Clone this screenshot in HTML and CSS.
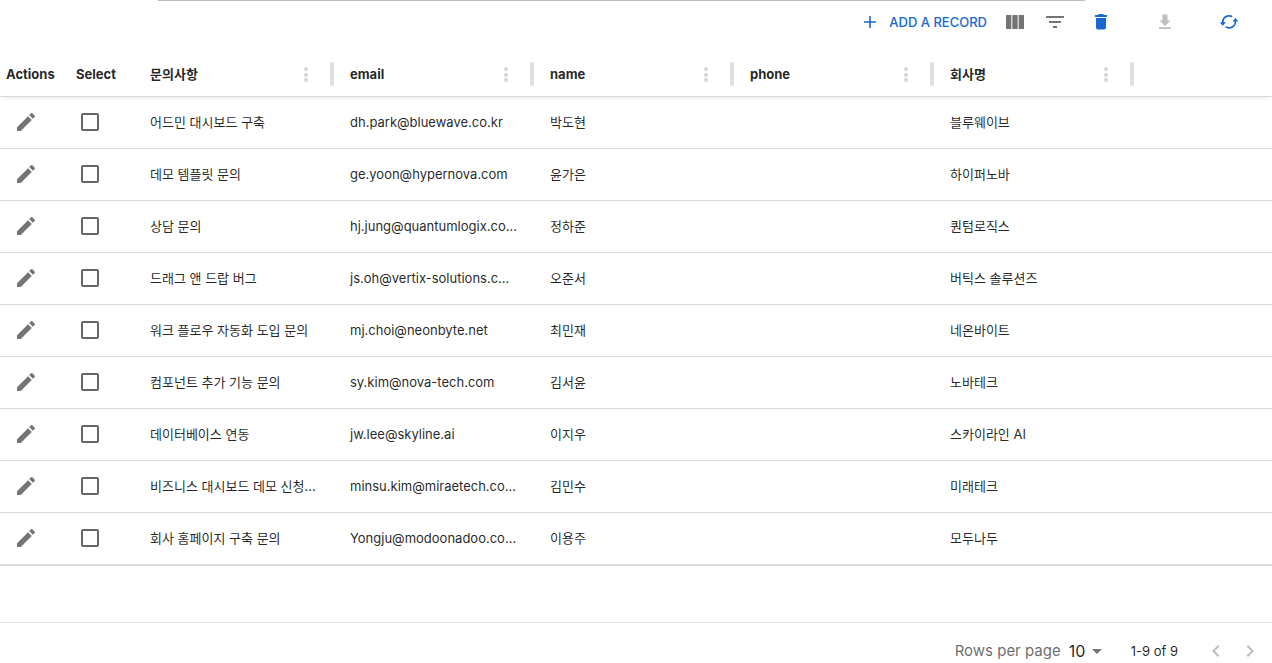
FILE: index.html
```html
<!DOCTYPE html>
<html lang="ko">
<head>
    <meta charset="UTF-8">
    <meta name="viewport" content="width=device-width, initial-scale=1">
    <title>Records</title>
    <link rel="stylesheet" href="styles.css">
</head>
<body>
    <svg class="symbols" aria-hidden="true">
        <symbol id="edit" viewBox="0 0 24 24"><path d="M3 17.25V21h3.75L17.81 9.94l-3.75-3.75L3 17.25zM20.71 7.04c.39-.39.39-1.02 0-1.41l-2.34-2.34a.9959.9959 0 0 0-1.41 0l-1.83 1.83 3.75 3.75 1.83-1.83z"/></symbol>
        <symbol id="more" viewBox="0 0 18 18"><circle cx="9" cy="4" r="2"/><circle cx="9" cy="10" r="2"/><circle cx="9" cy="15" r="2"/></symbol>
    </svg>

    <div class="top-line"></div>
    <div class="toolbar">
        <button class="add-btn">
            <svg class="icon-sm" viewBox="0 0 18 18"><path d="M3 8.200h5.200V3h1.600v5.200H15v1.600H9.800V15H8.200V9.800H3z"/></svg>
            ADD A RECORD
        </button>
        <button class="icon-btn" aria-label="Columns">
            <svg class="icon" viewBox="0 0 24 24"><path d="M14.670 5v14H9.330V5h5.340zm1 14H21V5h-5.330v14zm-7.340 0V5H3v14h5.330z"/></svg>
        </button>
        <button class="icon-btn" aria-label="Filter">
            <svg class="icon" viewBox="0 0 24 24"><path d="M10 18h4v-2h-4v2zM3 6v2h18V6H3zm3 7h12v-2H6v2z"/></svg>
        </button>
        <div class="tools">
            <button class="tool-btn" aria-label="Delete">
                <svg class="icon-sm" viewBox="0 0 18 18"><path d="M4 14.500C4 15.700 4.900 16.500 6 16.500h6c1.100 0 2-.8 2-2V5H4v9.500zM15 2h-3l-1-.9H7L6 2H3v2h12V2z"/></svg>
            </button>
            <button class="tool-btn" aria-label="Download" disabled>
                <svg class="icon-sm" viewBox="0 0 18 18"><path d="M14.500 7.500h-3V1.500h-5v6h-3L9 13l5.500-5.500zM3 14.200v1.800h12v-1.800H3z"/></svg>
            </button>
            <button class="tool-btn" aria-label="Refresh">
                <svg class="icon" viewBox="0 0 24 24"><path d="M21.500 11.500 18.400 8 15.500 11.500h2c.1 3.200-2.200 5.500-5.500 5.500-1 0-1.900-.2-2.700-.7L8.200 17.600c1.100.7 2.400 1.100 3.800 1.100 4.200 0 7.200-3.200 7.200-7.200h2.300zM6.700 12.300C6.500 9 8.800 6.700 12 6.700c.9 0 1.800.2 2.600.6l1.200-1.200A7.300 7.300 0 0 0 12 5c-4.200 0-7.200 3.200-7 7.300H2.700l3.100 3.500 3.100-3.500H6.700z"/></svg>
            </button>
        </div>
    </div>

    <main class="grid">
        <table>
            <colgroup>
                <col class="col-actions">
                <col class="col-select">
                <col class="col-data">
                <col class="col-data">
                <col class="col-data">
                <col class="col-data">
                <col class="col-data">
                <col>
            </colgroup>
            <thead>
                <tr>
                    <th class="narrow">Actions</th>
                    <th class="narrow">Select</th>
                    <th><div class="head"><span>문의사항</span><button class="menu-btn" aria-label="문의사항 menu"><svg class="icon-sm"><use href="#more"/></svg></button><i class="resizer"></i></div></th>
                    <th><div class="head"><span>email</span><button class="menu-btn" aria-label="email menu"><svg class="icon-sm"><use href="#more"/></svg></button><i class="resizer"></i></div></th>
                    <th><div class="head"><span>name</span><button class="menu-btn" aria-label="name menu"><svg class="icon-sm"><use href="#more"/></svg></button><i class="resizer"></i></div></th>
                    <th><div class="head"><span>phone</span><button class="menu-btn" aria-label="phone menu"><svg class="icon-sm"><use href="#more"/></svg></button><i class="resizer"></i></div></th>
                    <th><div class="head"><span>회사명</span><button class="menu-btn" aria-label="회사명 menu"><svg class="icon-sm"><use href="#more"/></svg></button><i class="resizer"></i></div></th>
                    <th></th>
                </tr>
            </thead>
            <tbody id="rows"></tbody>
        </table>
    </main>

    <footer class="pagination">
        <label for="page-size">Rows per page</label>
        <div class="page-size">
            <select id="page-size">
                <option>5</option>
                <option selected>10</option>
                <option>25</option>
            </select>
            <svg class="icon" viewBox="0 0 24 24"><path d="M7 10l5 5 5-5z"/></svg>
        </div>
        <span class="range">1-9 of 9</span>
        <button class="page-btn" aria-label="Previous page" disabled>
            <svg class="icon" viewBox="0 0 24 24"><path d="M15.410 7.410 14 6l-6 6 6 6 1.410-1.410L10.830 12z"/></svg>
        </button>
        <button class="page-btn" aria-label="Next page" disabled>
            <svg class="icon" viewBox="0 0 24 24"><path d="M8.590 16.590 10 18l6-6-6-6-1.410 1.410L13.170 12z"/></svg>
        </button>
    </footer>

    <script src="script.js"></script>
</body>
</html>
```

FILE: styles.css
```css
* {
    box-sizing: border-box;
}

body {
    margin: 0;
    height: 100vh;
    display: flex;
    flex-direction: column;
    overflow: hidden;
    background: #fff;
    color: rgba(0, 0, 0, 0.87);
    font-family: Inter, "Noto Sans CJK KR", sans-serif;
    font-size: 13px;
    line-height: 20px;
}

button {
    display: flex;
    align-items: center;
    justify-content: center;
    padding: 0;
    border: none;
    background: none;
    font: inherit;
    color: #757575;
    cursor: pointer;
}

svg {
    display: block;
    fill: currentColor;
}

.symbols {
    position: absolute;
    width: 0;
    height: 0;
}

.icon {
    width: 24px;
    height: 24px;
}

.icon-sm {
    width: 18px;
    height: 18px;
}

/* toolbar */
.top-line {
    height: 1px;
    margin: 0 187px 0 158px;
    background: #bdbdbd;
}

.toolbar {
    display: flex;
    justify-content: flex-end;
    align-items: center;
    height: 51px;
    padding: 0 17px 9px;
}

.add-btn {
    gap: 10px;
    padding: 8px;
    color: #1967d2;
    font-weight: 500;
}

.icon-btn {
    width: 40px;
    height: 40px;
}

.tools {
    display: flex;
    gap: 12px;
}

.tool-btn {
    width: 52px;
    height: 40px;
    color: #1967d2;
}

.tool-btn:disabled {
    color: #bdbdbd;
}

/* table */
.grid {
    flex: 1;
}

table {
    width: 100%;
    table-layout: fixed;
    border-collapse: separate;
    border-spacing: 0;
}

.col-actions {
    width: 70px;
}

.col-select {
    width: 72px;
}

.col-data {
    width: 200px;
}

th {
    height: 45px;
    padding: 0 8px;
    border-bottom: 1px solid #d9d9d9;
    font-weight: 700;
    text-align: left;
}

th.narrow {
    padding: 0 0 0 6px;
}

thead {
    box-shadow: 0 4px 4px -3px rgba(0, 0, 0, 0.1);
}

td {
    height: 52px;
    padding: 0 8px 2px;
    border-bottom: 1px solid #d9d9d9;
    white-space: nowrap;
}

tbody tr:last-child td {
    height: 53px;
    border-bottom-width: 2px;
}

.head {
    display: flex;
    align-items: center;
}

.head span {
    flex: 1;
}

.menu-btn {
    color: #d6d6d6;
}

.resizer {
    width: 4px;
    height: 24px;
    margin-left: 15px;
    border-radius: 2px;
    background: #e0e0e0;
}

td.edit-cell {
    padding: 0 14px 2px;
}

td.check-cell {
    padding: 0 0 2px 11px;
}

.check-cell input {
    display: block;
    appearance: none;
    width: 18px;
    height: 18px;
    margin: 0;
    border: 2px solid #666;
    border-radius: 2px;
}

/* pagination */
.pagination {
    display: flex;
    align-items: center;
    height: 41px;
    padding: 16px 10px 0 0;
    justify-content: flex-end;
    border-top: 1px solid #e0e0e0;
}

.pagination label {
    margin-right: 8px;
    color: rgba(0, 0, 0, 0.6);
    font-size: 15px;
    line-height: 24px;
}

.page-size {
    display: grid;
    align-items: center;
    margin-right: 22px;
}

.page-size select {
    grid-area: 1 / 1;
    appearance: none;
    width: 40px;
    height: 24px;
    padding: 0;
    border: none;
    background: none;
    color: inherit;
    font: 16px Inter, sans-serif;
}

.page-size svg {
    grid-area: 1 / 1;
    justify-self: end;
    color: #757575;
    pointer-events: none;
}

.range {
    margin-right: 26px;
    font-size: 13px;
}

.page-btn {
    width: 24px;
    height: 24px;
    color: #bdbdbd;
}

.page-btn + .page-btn {
    margin-left: 10px;
}
```

FILE: script.js
```js
const rows = [
    ['어드민 대시보드 구축', 'dh.park@bluewave.co.kr', '박도현', '', '블루웨이브'],
    ['데모 템플릿 문의', 'ge.yoon@hypernova.com', '윤가은', '', '하이퍼노바'],
    ['상담 문의', 'hj.jung@quantumlogix.co...', '정하준', '', '퀀텀로직스'],
    ['드래그 앤 드랍 버그', 'js.oh@vertix-solutions.c...', '오준서', '', '버틱스 솔루션즈'],
    ['워크 플로우 자동화 도입 문의', 'mj.choi@neonbyte.net', '최민재', '', '네온바이트'],
    ['컴포넌트 추가 기능 문의', 'sy.kim@nova-tech.com', '김서윤', '', '노바테크'],
    ['데이터베이스 연동', 'jw.lee@skyline.ai', '이지우', '', '스카이라인 AI'],
    ['비즈니스 대시보드 데모 신청...', 'minsu.kim@miraetech.co...', '김민수', '', '미래테크'],
    ['회사 홈페이지 구축 문의', 'Yongju@modoonadoo.co...', '이용주', '', '모두나두']
];

document.getElementById('rows').innerHTML = rows.map(function (row) {
    const cells = row.map(function (text) {
        return '<td>' + text + '</td>';
    }).join('');

    return '<tr>' +
        '<td class="edit-cell"><button aria-label="Edit ' + row[2] + '"><svg class="icon"><use href="#edit"/></svg></button></td>' +
        '<td class="check-cell"><input type="checkbox" aria-label="Select ' + row[2] + '"></td>' +
        cells + '<td></td></tr>';
}).join('');
```
